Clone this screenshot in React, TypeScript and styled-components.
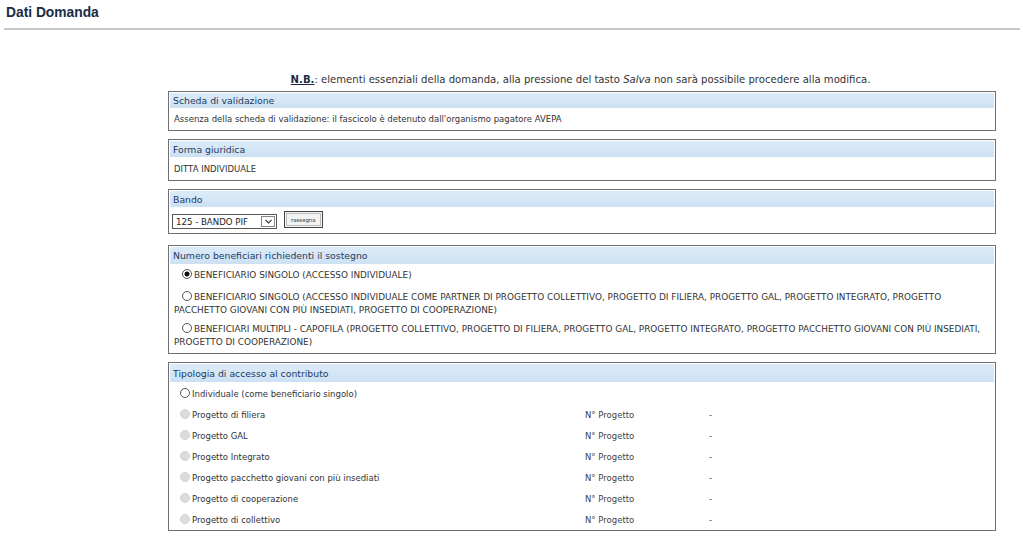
import React from "react";
import styled, { createGlobalStyle } from "styled-components";

const GlobalStyle = createGlobalStyle`
  html, body {
    margin: 0;
    padding: 0;
    background: #ffffff;
  }
  body {
    font-family: "DejaVu Sans", Verdana, sans-serif;
    color: #333;
  }
`;

const Page = styled.div`
  width: 1023px;
  height: 549px;
  overflow: hidden;
`;

const TitleBar = styled.div`
  height: 28px;
  margin: 0 3px 0 4px;
  border-bottom: 2px solid #c4c6ca;
  display: flex;
  align-items: flex-start;
`;

const Title = styled.h1`
  margin: 5px 0 0 2px;
  font-family: "Liberation Sans", Arial, sans-serif;
  font-size: 13.8px;
  font-weight: bold;
  color: #1b2c45;
`;

const Note = styled.p`
  margin: 44px 0 0 0;
  text-align: center;
  font-size: 10.1px;
  color: #333;
  padding-left: 138px;

  b {
    text-decoration: underline;
    color: #1b2c45;
  }
  i {
    font-style: italic;
  }
`;

const Content = styled.div`
  margin: 6px 0 0 168px;
  width: 828px;
  display: flex;
  flex-direction: column;
`;

const Section = styled.section<{ $gap?: number }>`
  border: 1px solid #6f6f6f;
  padding: 1px 1px 0 1px;
  box-sizing: border-box;
  margin-bottom: ${(p) => p.$gap ?? 8}px;
`;

const SectionHeader = styled.div<{ $h?: number }>`
  height: ${(p) => p.$h ?? 15}px;
  background: linear-gradient(#dcebf8, #cde1f4);
  color: #1d3a60;
  font-size: 9.3px;
  display: flex;
  align-items: center;
  padding-left: 3px;
`;

const Body = styled.div<{ $h: number }>`
  height: ${(p) => p.$h}px;
  display: flex;
  align-items: center;
  padding-left: 4px;
  font-size: 8.5px;
  color: #333;
`;

const SelectRow = styled.div`
  height: 26px;
  display: flex;
  align-items: center;
  gap: 7px;
  padding-left: 2px;
`;

const Select = styled.div`
  width: 105px;
  height: 15px;
  border: 1px solid #555;
  box-sizing: border-box;
  display: flex;
  align-items: center;
  justify-content: space-between;
  font-size: 8.6px;
  color: #222;
  padding-left: 3px;
  margin-top: 3px;
`;

const SelectArrow = styled.span`
  width: 14px;
  height: 11px;
  border: 1px solid #888;
  margin-right: 1px;
  display: flex;
  align-items: center;
  justify-content: center;
  box-sizing: border-box;
`;

const Button = styled.div`
  height: 17px;
  padding: 0 6px;
  border: 1px solid #444;
  box-shadow: inset 0 0 0 1px #f4f4f4, inset 0 0 0 2px #bbb;
  background: #f3f3f3;
  font-size: 5.4px;
  color: #333;
  display: flex;
  align-items: center;
  box-sizing: border-box;
  margin-top: -1px;
`;

const OptionList = styled.div`
  padding: 5px 4px 4px 4px;
  display: flex;
  flex-direction: column;
`;

const Option = styled.div<{ $top?: number }>`
  font-size: 8.9px;
  line-height: 13px;
  color: #333;
  margin-top: ${(p) => p.$top ?? 0}px;
`;

const Radio = styled.span<{ $checked?: boolean; $disabled?: boolean }>`
  display: inline-block;
  width: 8px;
  height: 8px;
  border-radius: 50%;
  border: 1px solid ${(p) => (p.$disabled ? "#d4d4d4" : "#555")};
  background: ${(p) =>
    p.$disabled
      ? "#dcdcdc"
      : p.$checked
      ? "radial-gradient(circle, #111 0 2.2px, #fff 2.8px)"
      : "#fff"};
  vertical-align: -1px;
  margin: 0 2px 0 8px;
`;

const AccessList = styled.div`
  display: flex;
  flex-direction: column;
  padding-top: 1px;
`;

const AccessRow = styled.div`
  height: 21px;
  display: grid;
  grid-template-columns: 415px 124px 1fr;
  align-items: center;
  font-size: 8.5px;
  color: #333;
`;

const AccessLabel = styled.span`
  padding-left: 2px;
`;

const Muted = styled.span`
  color: #444;
`;

const accessRows = [
  "Progetto di filiera",
  "Progetto GAL",
  "Progetto Integrato",
  "Progetto pacchetto giovani con più insediati",
  "Progetto di cooperazione",
  "Progetto di collettivo",
];

const App = () => {
  return (
    <Page>
      <GlobalStyle />
      <TitleBar>
        <Title>Dati Domanda</Title>
      </TitleBar>
      <Note>
        <b>N.B.</b>: elementi essenziali della domanda, alla pressione del tasto{" "}
        <i>Salva</i> non sarà possibile procedere alla modifica.
      </Note>
      <Content>
        <Section>
          <SectionHeader>Scheda di validazione</SectionHeader>
          <Body $h={22}>
            Assenza della scheda di validazione: il fascicolo è detenuto dall'organismo pagatore AVEPA
          </Body>
        </Section>
        <Section>
          <SectionHeader $h={16}>Forma giuridica</SectionHeader>
          <Body $h={23}>DITTA INDIVIDUALE</Body>
        </Section>
        <Section $gap={11}>
          <SectionHeader $h={16}>Bando</SectionHeader>
          <SelectRow>
            <Select>
              125 - BANDO PIF
              <SelectArrow>
                <svg width="7" height="5" viewBox="0 0 7 5">
                  <path d="M0.5 0.8 L3.5 3.8 L6.5 0.8" fill="none" stroke="#333" strokeWidth="1.2" />
                </svg>
              </SelectArrow>
            </Select>
            <Button>rassegna</Button>
          </SelectRow>
        </Section>
        <Section>
          <SectionHeader $h={17}>Numero beneficiari richiedenti il sostegno</SectionHeader>
          <OptionList>
            <Option>
              <Radio $checked />
              BENEFICIARIO SINGOLO (ACCESSO INDIVIDUALE)
            </Option>
            <Option $top={9}>
              <Radio />
              BENEFICIARIO SINGOLO (ACCESSO INDIVIDUALE COME PARTNER DI PROGETTO COLLETTIVO, PROGETTO DI FILIERA, PROGETTO GAL, PROGETTO INTEGRATO, PROGETTO
              PACCHETTO GIOVANI CON PIÙ INSEDIATI, PROGETTO DI COOPERAZIONE)
            </Option>
            <Option $top={6}>
              <Radio />
              BENEFICIARI MULTIPLI - CAPOFILA (PROGETTO COLLETTIVO, PROGETTO DI FILIERA, PROGETTO GAL, PROGETTO INTEGRATO, PROGETTO PACCHETTO GIOVANI CON PIÙ INSEDIATI,
              PROGETTO DI COOPERAZIONE)
            </Option>
          </OptionList>
        </Section>
        <Section>
          <SectionHeader $h={18}>Tipologia di accesso al contributo</SectionHeader>
          <AccessList>
            <AccessRow>
              <AccessLabel>
                <Radio />
                Individuale (come beneficiario singolo)
              </AccessLabel>
            </AccessRow>
            {accessRows.map((label) => (
              <AccessRow key={label}>
                <AccessLabel>
                  <Radio $disabled />
                  {label}
                </AccessLabel>
                <Muted>N° Progetto</Muted>
                <Muted>-</Muted>
              </AccessRow>
            ))}
          </AccessList>
        </Section>
      </Content>
    </Page>
  );
};

export default App;
